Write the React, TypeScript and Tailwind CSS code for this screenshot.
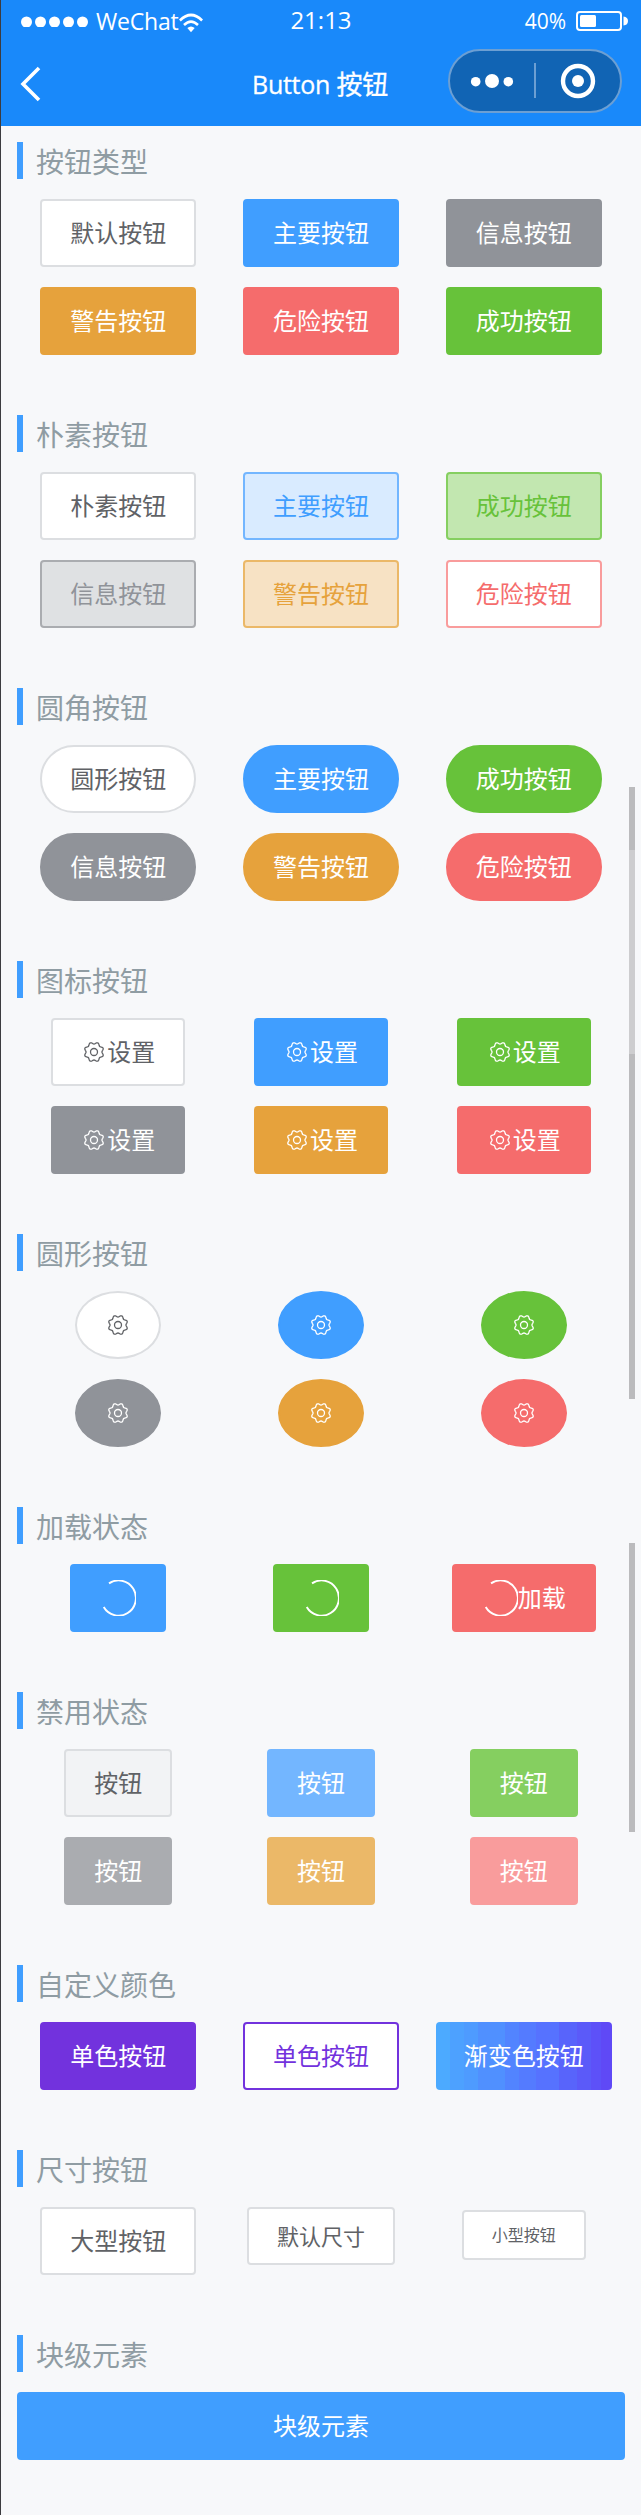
import type { ReactNode } from "react";

const BASE = "box-border flex shrink-0 items-center justify-center border-2 whitespace-nowrap";

const tone = {
  plain: "bg-white border-[#dcdee1] text-[#606266]",
  primary: "bg-[#409eff] border-[#409eff] text-white",
  info: "bg-[#909399] border-[#909399] text-white",
  warning: "bg-[#e6a23c] border-[#e6a23c] text-white",
  danger: "bg-[#f56c6c] border-[#f56c6c] text-white",
  success: "bg-[#67c23a] border-[#67c23a] text-white",
  primaryPlain: "bg-[#d9ebff] border-[#73b6ff] text-[#409eff]",
  successPlain: "bg-[#c2e7b0] border-[#85cf60] text-[#67c23a]",
  infoPlain: "bg-[#dfe1e3] border-[#aaacb0] text-[#909399]",
  warningPlain: "bg-[#f7e2c4] border-[#ebb868] text-[#e6a23c]",
  dangerPlain: "bg-white border-[#f99c9c] text-[#f56c6c]",
  plainOff: "bg-[#f2f3f5] border-[#dcdee1] text-[#606266]",
  primaryOff: "bg-[#73b6ff] border-[#73b6ff] text-white",
  successOff: "bg-[#85cf60] border-[#85cf60] text-white",
  infoOff: "bg-[#aaacb0] border-[#aaacb0] text-white",
  warningOff: "bg-[#ebb868] border-[#ebb868] text-white",
  dangerOff: "bg-[#f99c9c] border-[#f99c9c] text-white",
  purple: "bg-[#7232dd] border-[#7232dd] text-white",
  purplePlain: "bg-white border-[#7232dd] text-[#7232dd]",
};

type Tone = keyof typeof tone;

const SIX: Tone[] = ["plain", "primary", "success", "info", "warning", "danger"];

function Btn({ t, shape = "rounded", className = "h-[68px] px-7 text-2xl", children }: { t: Tone; shape?: string; className?: string; children: ReactNode }) {
  return <button className={`${BASE} ${tone[t]} ${shape} ${className}`}>{children}</button>;
}

// Eight rounded teeth, with a notch on each axis and each diagonal.
const GEAR_OUTLINE = Array.from({ length: 96 }, (_, i) => {
  const a = (i / 96) * Math.PI * 2;
  const r = 8.9 - 0.95 * Math.cos(8 * a);
  return `${(r * Math.cos(a)).toFixed(2)},${(r * Math.sin(a)).toFixed(2)}`;
}).join(" ");

function Gear() {
  return (
    <svg className="h-[26px] w-[26px]" viewBox="-13 -13 26 26" fill="none" stroke="currentColor" strokeWidth="1.3" strokeLinejoin="round">
      <polygon points={GEAR_OUTLINE} />
      <circle r="3.5" />
    </svg>
  );
}

function Spinner() {
  return (
    <svg className="h-9 w-9" viewBox="0 0 36 36" fill="none" stroke="currentColor" strokeWidth="1.9">
      <path d="M9 3.4A17.3 17.6 0 1 1 3.7 27" />
    </svg>
  );
}

function Section({ title, children, block }: { title: string; children: ReactNode; block?: boolean }) {
  return (
    <section className="mb-10">
      <h2 className="mb-5 flex h-[37px] items-center border-l-6 border-[#409eff] pl-[13px] text-[28px] leading-[37px] text-[#8f9ca3]">
        <span className="pt-1">{title}</span>
      </h2>
      {block ? children : <div className="grid grid-cols-3 items-start justify-items-center gap-y-5 pb-5">{children}</div>}
    </section>
  );
}

function Header() {
  return (
    <header className="h-[126px] bg-[#1989fa] text-white">
      <div className="grid h-10 grid-cols-3 items-center pr-[13px] pl-[13px]">
        <div className="flex items-center pl-[7px]">
          <svg className="h-3 w-[70px]" viewBox="0 0 70 12" fill="currentColor">
            {[5.5, 19.5, 33.5, 47.5, 61.5].map((x) => (
              <circle key={x} cx={x} cy="7" r="5.5" />
            ))}
          </svg>
          <span className="ml-[5px] w-[83px] text-[23px] leading-10 tracking-[-0.2px]">WeChat</span>
          <svg className="mt-1 h-5 w-6" viewBox="0 0 24 20" fill="none" stroke="currentColor" strokeWidth="2.6">
            <path d="M.9 7.5Q12 -3.5 23.1 7.5M5 12Q12 5.2 19 12" />
            <path d="M8.3 15Q12 12 15.7 15L12 19.3Z" fill="currentColor" stroke="none" />
          </svg>
        </div>
        <div className="pb-0.5 text-center text-2xl leading-10">21:13</div>
        <div className="flex items-center justify-end">
          <span className="mr-2.5 pt-0.5 text-[21px]">40%</span>
          <svg className="h-5 w-[52px]" viewBox="0 0 52 20">
            <rect x="1" y="1" width="44" height="18" rx="3" fill="none" stroke="currentColor" strokeWidth="2" />
            <rect x="4" y="4" width="16" height="12" rx="1.5" fill="currentColor" />
            <path d="M47.5 5.5Q52 6 52 10T47.5 14.5Z" fill="currentColor" />
          </svg>
        </div>
      </div>
      <div className="grid h-[86px] grid-cols-3 items-center pr-[19px] pb-1 pl-[17px]">
        <svg className="mt-1.5 h-9 w-6" viewBox="0 0 24 36" fill="none" stroke="currentColor" strokeWidth="3.6">
          <path d="M21 2L5 18L21 34" />
        </svg>
        <div className="pt-1.5 text-center text-[26px] tracking-[-0.3px] whitespace-nowrap [-webkit-text-stroke:0.3px_white]">
          <span className="text-[25px]">Button</span> 按钮
        </div>
        <div className="flex h-16 w-[174px] items-center justify-self-end rounded-full border-2 border-[#6c9fd3] bg-[#1164b4]">
          <svg className="h-[60px] w-[170px]" viewBox="0 0 170 60" fill="currentColor">
            <circle cx="25.7" cy="30.7" r="4.8" />
            <circle cx="42" cy="30" r="7" />
            <circle cx="58.3" cy="30.7" r="4.8" />
            <path d="M84 12h2v35h-2z" fill="#6c9fd3" />
            <circle cx="128" cy="30" r="15" fill="none" stroke="currentColor" strokeWidth="4.4" />
            <circle cx="128" cy="30" r="6" />
          </svg>
        </div>
      </div>
    </header>
  );
}

export default function App() {
  return (
    <div className="relative h-[2515px] w-[641px] overflow-hidden border-l border-[#3c3c40] bg-[#f7f8fa] font-['Open_Sans','Noto_Sans_CJK_SC',sans-serif]">
      <Header />
      <main className="pt-4 pr-4 pl-4">
        <Section title="按钮类型">
          <Btn t="plain">默认按钮</Btn>
          <Btn t="primary">主要按钮</Btn>
          <Btn t="info">信息按钮</Btn>
          <Btn t="warning">警告按钮</Btn>
          <Btn t="danger">危险按钮</Btn>
          <Btn t="success">成功按钮</Btn>
        </Section>
        <Section title="朴素按钮">
          <Btn t="plain">朴素按钮</Btn>
          <Btn t="primaryPlain">主要按钮</Btn>
          <Btn t="successPlain">成功按钮</Btn>
          <Btn t="infoPlain">信息按钮</Btn>
          <Btn t="warningPlain">警告按钮</Btn>
          <Btn t="dangerPlain">危险按钮</Btn>
        </Section>
        <Section title="圆角按钮">
          <Btn t="plain" shape="rounded-full">圆形按钮</Btn>
          <Btn t="primary" shape="rounded-full">主要按钮</Btn>
          <Btn t="success" shape="rounded-full">成功按钮</Btn>
          <Btn t="info" shape="rounded-full">信息按钮</Btn>
          <Btn t="warning" shape="rounded-full">警告按钮</Btn>
          <Btn t="danger" shape="rounded-full">危险按钮</Btn>
        </Section>
        <Section title="图标按钮">
          {SIX.map((t) => (
            <Btn key={t} t={t}>
              <Gear />
              设置
            </Btn>
          ))}
        </Section>
        <Section title="圆形按钮">
          {SIX.map((t) => (
            <Btn key={t} t={t} shape="rounded-[50%]">
              <Gear />
            </Btn>
          ))}
        </Section>
        <Section title="加载状态">
          <Btn t="primary"><Spinner /></Btn>
          <Btn t="success"><Spinner /></Btn>
          <Btn t="danger"><Spinner />加载</Btn>
        </Section>
        <Section title="禁用状态">
          <Btn t="plainOff">按钮</Btn>
          <Btn t="primaryOff">按钮</Btn>
          <Btn t="successOff">按钮</Btn>
          <Btn t="infoOff">按钮</Btn>
          <Btn t="warningOff">按钮</Btn>
          <Btn t="dangerOff">按钮</Btn>
        </Section>
        <Section title="自定义颜色">
          <Btn t="purple">单色按钮</Btn>
          <Btn t="purplePlain">单色按钮</Btn>
          <button className="flex h-[68px] items-center justify-center rounded bg-[linear-gradient(90deg,#4caaff_0_8%,#4da1ff_8%_16%,#4e9bff_16%_24%,#5090ff_24%_39%,#5284ff_39%_47%,#547bff_47%_57%,#5672ff_57%_70%,#5864fb_70%_80%,#5b5af9_80%_88%,#5d51f8_88%_94%,#5f49f6_94%)] px-7 text-2xl whitespace-nowrap text-white">
            渐变色按钮
          </button>
        </Section>
        <Section title="尺寸按钮">
          <Btn t="plain">大型按钮</Btn>
          <Btn t="plain" className="h-[58px] px-7 text-[22px]">默认尺寸</Btn>
          <Btn t="plain" className="mt-[3px] mb-[15px] h-[50px] px-7 text-base">小型按钮</Btn>
        </Section>
        <Section title="块级元素" block>
          <Btn t="primary" className="h-[68px] w-full text-2xl">块级元素</Btn>
        </Section>
      </main>
      <div className="absolute top-[787px] right-1.5 flex h-[612px] w-1.5 flex-col bg-[#bbbbbd]">
        <div className="mt-[63px] h-[204px] bg-[#cdcdcf]" />
      </div>
      <div className="absolute top-[1543px] right-1.5 h-[289px] w-1.5 bg-[#bbbbbd]" />
    </div>
  );
}
